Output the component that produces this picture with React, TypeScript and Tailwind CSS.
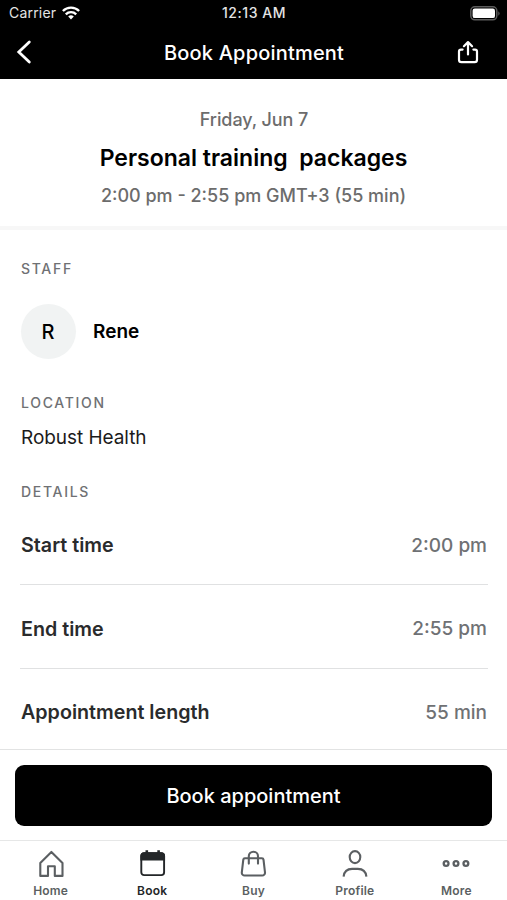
const details = [
  { label: 'Start time', value: '2:00 pm' },
  { label: 'End time', value: '2:55 pm' },
  { label: 'Appointment length', value: '55 min' },
];

const tabs = [
  { label: 'Home', icon: HomeIcon },
  { label: 'Book', icon: CalendarIcon, active: true },
  { label: 'Buy', icon: BagIcon },
  { label: 'Profile', icon: ProfileIcon },
  { label: 'More', icon: MoreIcon },
];

function HomeIcon() {
  return (
    <svg width="28" height="28" viewBox="0 0 28 28" fill="none" stroke="currentColor" strokeWidth="2.1" strokeLinejoin="round">
      <path d="M3.3 25.9V13L14.4 1.9 25.5 13v12.9h-7.7v-9.6H11v9.6z" />
    </svg>
  );
}

function CalendarIcon() {
  return (
    <svg width="28" height="28" viewBox="0 0 28 28" fill="none" stroke="currentColor" strokeWidth="1.9">
      <rect x="3.3" y="3.1" width="22.8" height="22" rx="2.8" />
      <path d="M3.3 9.6V5.9a2.8 2.8 0 0 1 2.8-2.8h17.2a2.8 2.8 0 0 1 2.8 2.8v3.7z" fill="currentColor" />
      <path d="M8.8.2v3M20.6.2v3" strokeWidth="2.6" />
    </svg>
  );
}

function BagIcon() {
  return (
    <svg width="28" height="28" viewBox="0 0 28 28" fill="none" stroke="currentColor" strokeWidth="2.1" strokeLinejoin="round" strokeLinecap="round">
      <path d="M5.9 8.3h17a1.6 1.6 0 0 1 1.6 1.4L26 22.500a2.8 2.8 0 0 1-2.8 3H5.6a2.8 2.8 0 0 1-2.8-3L4.3 9.7a1.6 1.6 0 0 1 1.6-1.400z" />
      <path d="M9.8 13.6V6.3a4.6 4.6 0 0 1 9.2 0v7.3" />
    </svg>
  );
}

function ProfileIcon() {
  return (
    <svg width="28" height="28" viewBox="0 0 28 28" fill="none" stroke="currentColor" strokeWidth="2.1">
      <ellipse cx="14" cy="7.1" rx="5.3" ry="6" />
      <path d="M2.6 26.6c.6-5.2 4-7.7 8.5-7.7h5.8c4.5 0 7.9 2.5 8.5 7.7" />
    </svg>
  );
}

function MoreIcon() {
  return (
    <svg width="28" height="28" viewBox="0 0 28 28" fill="none" stroke="currentColor" strokeWidth="2.3">
      <circle cx="4.1" cy="13.5" r="2.4" />
      <circle cx="14" cy="13.5" r="2.4" />
      <circle cx="23.9" cy="13.5" r="2.4" />
    </svg>
  );
}

function StatusBar() {
  return (
    <div className="grid h-[26px] grid-cols-3 items-center pl-[9px] pr-[6px] text-[14px] leading-[26px] text-[#e4e4e4]">
      <div className="flex items-center gap-[6px]">
        <span className="tracking-[0.2px]">Carrier</span>
        <svg width="18" height="14" viewBox="0 0 18 14" fill="none" stroke="#fff" strokeWidth="2.4">
          <path d="M.9 5a11.5 11.5 0 0 1 16.2 0" />
          <path d="M3.8 8.3a7.4 7.4 0 0 1 10.4 0" />
          <path d="M9 13.6l-2.8-3a4 4 0 0 1 5.6 0z" fill="#fff" stroke="none" />
        </svg>
      </div>
      <span className="mr-[2px] text-center font-medium tracking-[0.55px]">12:13 AM</span>
      <svg className="justify-self-end" width="31" height="15" viewBox="0 0 31 15">
        <rect x=".8" y=".8" width="26" height="13" rx="4" fill="none" stroke="#5c5c5c" strokeWidth="1.5" />
        <rect x="2.6" y="2.5" width="22.4" height="9.6" rx="2.2" fill="#fff" />
        <path d="M28.3 5.2a2.7 2.7 0 0 1 0 4.6z" fill="#5c5c5c" />
      </svg>
    </div>
  );
}

function Header() {
  return (
    <header className="h-[79px] shrink-0 bg-black text-white">
      <StatusBar />
      <div className="grid h-[52px] grid-cols-[60px_1fr_60px] items-center">
        <svg className="ml-[16px]" width="16" height="24" viewBox="0 0 16 24" fill="none" stroke="currentColor" strokeWidth="2.8" strokeLinecap="round">
          <path d="M13.3 2L2.8 12l10.5 10" />
        </svg>
        <h1 className="pl-px pt-px text-center text-[20px] font-medium leading-[28px] tracking-[0.2px]">Book Appointment</h1>
        <svg className="ml-[9px]" width="24" height="24" viewBox="0 0 24 24" fill="none" stroke="currentColor" strokeWidth="2.2" strokeLinecap="round" strokeLinejoin="round">
          <path d="M6.6 9.6H5a2 2 0 0 0-2 2v8.2a2.4 2.4 0 0 0 2.4 2.4h13.2a2.4 2.4 0 0 0 2.4-2.4v-8.2a2 2 0 0 0-2-2h-1.6" />
          <path d="M12 14.5V2.2M7.9 6.2L12 2.1l4.1 4.1" />
        </svg>
      </div>
    </header>
  );
}

function SectionTitle({ children }: { children: string }) {
  return <h3 className="text-[14px] font-medium uppercase leading-[20px] tracking-[1.7px] text-[#6f7174]">{children}</h3>;
}

export default function App() {
  return (
    <div className="flex h-[900px] w-[507px] flex-col overflow-hidden bg-white font-['Inter',sans-serif] text-black">
      <Header />

      <section className="h-[151px] shrink-0 border-b-4 border-[#f7f7f7] pt-[27px] text-center">
        <p className="pl-px text-[18px] font-[450] leading-[28px] tracking-[-0.1px] text-[#6c6c6c]">Friday, Jun 7</p>
        <h2 className="mt-[8px] whitespace-pre text-[23px] font-semibold leading-[32px]">Personal training  packages</h2>
        <p className="mt-[8px] text-[18px] font-[450] leading-[28px] text-[#6c6c6c]">2:00 pm - 2:55 pm GMT+3 (55 min)</p>
      </section>

      <main className="min-h-0 flex-1 px-[20px] pt-[29px]">
        <div className="pl-px">
          <SectionTitle>Staff</SectionTitle>
          <div className="-ml-[0.5px] mt-[25px] flex items-center gap-[17.5px]">
            <div className="flex size-[55px] items-center justify-center rounded-full bg-[#f1f3f3] text-[20px] font-medium">R</div>
            <span className="pt-[2px] text-[19px] font-semibold">Rene</span>
          </div>
          <div className="mt-[34px]">
            <SectionTitle>Location</SectionTitle>
          </div>
          <p className="mt-[11px] text-[19px] leading-[28px] tracking-[-0.05px] text-[#1b1b1b]">Robust Health</p>
          <div className="mt-[30px]">
            <SectionTitle>Details</SectionTitle>
          </div>
        </div>
        <dl>
          {details.map((item) => (
            <div key={item.label} className="mr-[-1px] flex h-[83.3px] items-center justify-between border-b-[1.5px] border-[#e0e1e2] pl-px pr-px pt-[6px] text-[19px] last:border-b-0">
              <dt className="text-[19.7px] font-semibold text-[#2a2b2c]">{item.label}</dt>
              <dd className="font-[450] text-[#6f7174]">{item.value}</dd>
            </div>
          ))}
        </dl>
      </main>

      <div className="h-[91px] shrink-0 border-t-[1.5px] border-[#e2e3e3] px-[15px] pt-[15px]">
        <button className="h-[61px] w-full rounded-[9px] bg-black text-[20px] font-medium text-white">Book appointment</button>
      </div>

      <nav className="grid h-[60px] shrink-0 grid-cols-5 border-t-[1.5px] border-[#e6e7e7] pt-[9px]">
        {tabs.map((tab) => {
          const Icon = tab.icon;
          return (
            <div key={tab.label} className={tab.active ? 'flex flex-col items-center text-[#232628]' : 'flex flex-col items-center text-[#5b5f62]'}>
              <Icon />
              <span className="mt-[4px] text-[12px] font-semibold leading-[18px] tracking-[0.2px]">{tab.label}</span>
            </div>
          );
        })}
      </nav>
    </div>
  );
}
